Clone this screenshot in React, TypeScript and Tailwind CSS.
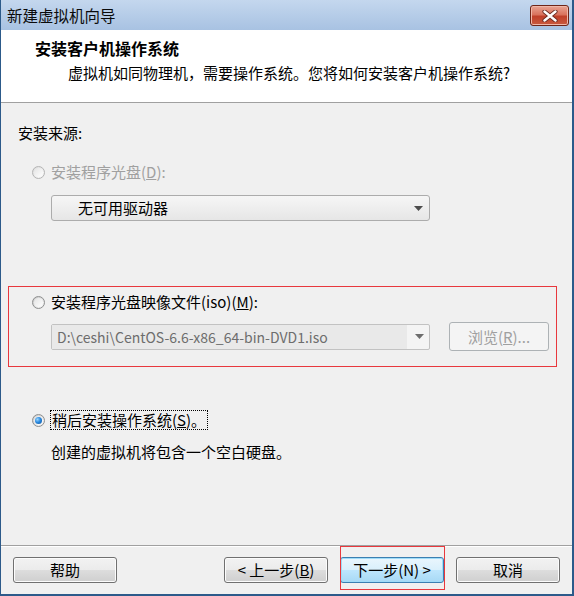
import React from "react";

const font = { fontFamily: '"Noto Sans CJK SC", "Noto Sans", sans-serif' };

function Radio({ state }: { state: "disabled" | "off" | "on" }) {
  const border = state === "disabled" ? "border-[#b4b4b4]" : "border-[#8e8f8f]";
  const fill =
    state === "disabled"
      ? "bg-[linear-gradient(135deg,#dcdcdc,#fafafa)]"
      : "bg-[linear-gradient(135deg,#c8c8c8,#f8f8f8)]";
  return (
    <span className={`relative inline-flex w-[13px] h-[13px] rounded-full border ${border} ${fill} items-center justify-center shrink-0`}>
      <span className="w-[9px] h-[9px] rounded-full bg-[linear-gradient(135deg,#e4e4e4,#ffffff)] flex items-center justify-center">
        {state === "on" && (
          <span className="w-[7px] h-[7px] rounded-full bg-[radial-gradient(circle_at_35%_35%,#9ad6ff_0%,#2a8ae0_45%,#0b4f98_100%)]" />
        )}
      </span>
    </span>
  );
}

function Arrow({ color }: { color: string }) {
  return (
    <svg width="9" height="5" viewBox="0 0 9 5">
      <path d="M0 0 H9 L4.5 5 Z" fill={color} />
    </svg>
  );
}

function Btn({ children, def }: { children: React.ReactNode; def?: boolean }) {
  return (
    <div
      className={`w-[104px] h-[26px] rounded-[3px] border flex items-center justify-center text-[15px] text-black whitespace-pre ${
        def
          ? "border-[#3c7fb1] bg-[linear-gradient(#eaf6fd_0%,#d9f0fc_50%,#bee6fd_50%,#a7d9f5_100%)] shadow-[inset_0_0_0_1px_#9fdcf8]"
          : "border-[#707070] bg-[linear-gradient(#f2f2f2_0%,#ebebeb_50%,#dddddd_50%,#cfcfcf_100%)] shadow-[inset_0_0_0_1px_#fcfcfc]"
      }`}
    >
      {children}
    </div>
  );
}

export default function App() {
  return (
    <div
      className="w-[574px] h-[596px] flex flex-col bg-[#f0f0f0] border-l border-r-2 border-b-2 border-[#2c5a8a] text-[15px] leading-[20px] text-black"
      style={font}
    >
      {/* title bar */}
      <div className="h-[30px] flex items-start bg-[linear-gradient(#c4d7ee,#a8c2e2)] shrink-0">
        <div className="pl-[6px] mt-[5px] text-[15.5px] leading-[20px] text-[#0b0b0b]">新建虚拟机向导</div>
        <div className="ml-auto mr-[3px] mt-[5px] w-[39px] h-[21px] rounded-[3px] border border-[#6e2518] bg-[linear-gradient(#e9a493_0%,#d9735e_45%,#c0402a_55%,#c85a3f_100%)] shadow-[inset_0_0_0_1px_#f0b7a8] flex items-center justify-center">
          <svg width="16" height="12" viewBox="0 0 16 12">
            <path d="M2.5 1.5 L13.5 10.5 M13.5 1.5 L2.5 10.5" stroke="#6a2a20" strokeWidth="4.2" strokeLinecap="round" />
            <path d="M2.5 1.5 L13.5 10.5 M13.5 1.5 L2.5 10.5" stroke="#ffffff" strokeWidth="2.4" strokeLinecap="round" />
          </svg>
        </div>
      </div>

      {/* header */}
      <div className="h-[73px] bg-white border-b border-[#a0a0a0] shrink-0 pt-[8px] pl-[34px]">
        <div className="font-bold text-[16px] leading-[20px]">安装客户机操作系统</div>
        <div className="mt-[5px] ml-[33px]">虚拟机如同物理机，需要操作系统。您将如何安装客户机操作系统?</div>
      </div>

      {/* body */}
      <div className="flex-1 flex flex-col">
        <div className="mt-[20px] ml-[17px] h-[20px]">安装来源:</div>

        <div className="mt-[19px] ml-[31px] h-[20px] flex items-center gap-[6px] text-[#a0a0a0]">
          <Radio state="disabled" />
          <span>
            安装程序光盘(<span className="underline">D</span>):
          </span>
        </div>

        <div className="mt-[13px] ml-[50px] w-[379px] h-[26px] rounded-[3px] border border-[#acacac] bg-[linear-gradient(#f6f6f6,#e6e6e6)] flex items-center pl-[26px] pr-[6px]">
          <span>无可用驱动器</span>
          <span className="ml-auto">
            <Arrow color="#4d4d4d" />
          </span>
        </div>

        <div className="mt-[65px] ml-[7px] w-[549px] h-[81px] border border-[#e8383d] pt-[5px]">
          <div className="pl-[23px] h-[20px] flex items-center gap-[6px]">
            <Radio state="off" />
            <span>
              安装程序光盘映像文件(iso)(<span className="underline">M</span>):
            </span>
          </div>
          <div className="mt-[10px] pl-[42px] h-[29px] flex items-center gap-[19px]">
            <div className="w-[379px] h-[26px] rounded-[2px] border border-[#c2c2c2] bg-[#f4f4f4] flex items-center">
              <div className="w-[355px] h-[24px] bg-[#e9e9e9] flex items-center pl-[5px] text-[#6d6d6d] text-[14px]">
                D:\ceshi\CentOS-6.6-x86_64-bin-DVD1.iso
              </div>
              <span className="ml-auto mr-[5px]">
                <Arrow color="#6d6d6d" />
              </span>
            </div>
            <div className="w-[100px] h-[29px] rounded-[3px] border border-[#adb2b5] bg-[#f4f4f4] flex items-center justify-center text-[#a0a0a0]">
              浏览(<span className="underline">R</span>)...
            </div>
          </div>
        </div>

        <div className="mt-[43px] ml-[31px] h-[20px] flex items-center gap-[5px]">
          <Radio state="on" />
          <span className="h-[20px] border border-dotted border-black px-[1px] flex items-center">
            稍后安装操作系统(<span className="underline">S</span>)。
          </span>
        </div>

        <div className="mt-[12px] ml-[50px] h-[20px]">创建的虚拟机将包含一个空白硬盘。</div>
      </div>

      {/* footer */}
      <div className="h-[49px] shrink-0 border-t border-[#a0a0a0] shadow-[inset_0_1px_0_#ffffff] flex items-start pt-[11px] pl-[12px] pr-[12px]">
        <Btn>帮助</Btn>
        <div className="ml-auto flex gap-[12px]">
          <Btn>
            {"< 上一步("}
            <span className="underline">B</span>
            {")"}
          </Btn>
          <div className="relative">
            <Btn def>{"下一步(N) >"}</Btn>
            <div className="absolute -top-[11px] -bottom-[7px] left-0 -right-[1px] border border-[#e8383d]" />
          </div>
          <Btn>取消</Btn>
        </div>
      </div>
    </div>
  );
}
